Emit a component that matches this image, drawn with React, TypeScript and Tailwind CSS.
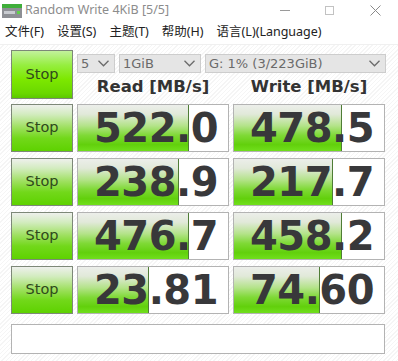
import { ReactNode } from 'react';

const rows = [
  { read: '522.0', readFill: 74, write: '478.5', writeFill: 72 },
  { read: '238.9', readFill: 67, write: '217.7', writeFill: 66 },
  { read: '476.7', readFill: 74, write: '458.2', writeFill: 72 },
  { read: '23.81', readFill: 47, write: '74.60', writeFill: 57 },
];

const barGradient =
  'bg-[linear-gradient(to_bottom,#eceeea_0%,#e1e9d9_20%,#b4e38a_45%,#7fd936_66%,#62d00c_86%,#70df1c_100%)]';

function Chevron() {
  return (
    <svg width="11" height="7" viewBox="0 0 11 7" className="shrink-0">
      <path d="M0.5 0.8 L5.5 5.8 L10.5 0.8" fill="none" stroke="#6b6b6b" strokeWidth="1.3" />
    </svg>
  );
}

function Select({ width, children }: { width: string; children: ReactNode }) {
  return (
    <div
      className={`${width} h-[19px] flex items-center justify-between pl-[3px] pr-[5px] bg-[#e5e5e5] border border-[#cdcdcd] text-[13px] text-[#6a6a6a]`}
    >
      <span className="leading-none">{children}</span>
      <Chevron />
    </div>
  );
}

function StopButton({ big }: { big?: boolean }) {
  return (
    <div
      className={`w-[62px] flex items-center justify-center border border-[#7d8878] text-[14.5px] text-[#2f4a1c] ${
        big
          ? 'h-[49px] bg-[linear-gradient(to_bottom,#c2f29c_0%,#96ee40_30%,#7de800_60%,#6ad800_90%,#5cc800_100%)]'
          : 'h-[48px] bg-[linear-gradient(to_bottom,#eef0ec_0%,#d3ecc0_20%,#9fe061_48%,#72d81a_72%,#5ed200_100%)]'
      }`}
    >
      Stop
    </div>
  );
}

function ValueBox({ value, fill }: { value: string; fill: number }) {
  return (
    <div className="relative w-[152px] h-[48px] bg-white border border-[#b3b3b3] overflow-hidden">
      <div
        className={`absolute left-0 top-0 bottom-0 ${barGradient} border-r border-[#4f7d36]`}
        style={{ width: `${fill}%` }}
      />
      <div className="relative h-full flex items-center justify-end pr-[10px] text-[40px] font-bold text-[#38383a] leading-none tracking-[-0.5px]">
        {value}
      </div>
    </div>
  );
}

export default function App() {
  return (
    <div
      className="w-[398px] h-[361px] bg-white overflow-hidden"
      style={{ fontFamily: '"DejaVu Sans", Verdana, sans-serif' }}
    >
      {/* title bar */}
      <div className="h-[21px] flex items-center font-['Noto_Sans','Noto_Sans_CJK_SC',sans-serif]">
        <svg width="20" height="14" viewBox="0 0 20 14" className="ml-[2px] mt-[1px]">
          <rect x="0" y="0" width="20" height="4" fill="#3fae3a" />
          <rect x="0" y="4" width="20" height="10" fill="#8d8f94" />
          <rect x="2" y="7" width="11" height="3" fill="#c8cbd0" />
          <rect x="15" y="7" width="3" height="3" fill="#5fd04a" />
        </svg>
        <span className="ml-[3px] text-[12.5px] text-[#8c8c8c]">Random Write 4KiB [5/5]</span>
        <div className="ml-auto flex items-center">
          <div className="w-[10px] h-px bg-[#9a9a9a] mr-[35px]" />
          <div className="w-[9px] h-[9px] border border-[#c2c2c2] mr-[36px]" />
          <svg width="11" height="11" viewBox="0 0 11 11" className="mr-[17px]">
            <path d="M0.5 0.5 L10.5 10.5 M10.5 0.5 L0.5 10.5" stroke="#8a8a8a" strokeWidth="1" />
          </svg>
        </div>
      </div>

      {/* menu bar */}
      <div className="h-[24px] flex items-center gap-[13px] pl-[5px] text-[12.5px] text-[#222] border-b border-[#f0f0f0] font-['Noto_Sans','Noto_Sans_CJK_SC',sans-serif]">
        <span>文件(F)</span>
        <span>设置(S)</span>
        <span>主题(T)</span>
        <span>帮助(H)</span>
        <span>语言(L)(Language)</span>
      </div>

      {/* main */}
      <div className="h-[316px] pl-[11px] pt-[5px] bg-[repeating-linear-gradient(135deg,#ffffff_0px,#ffffff_2px,#f5f5f5_2px,#f5f5f5_3px)]">
        <div className="flex gap-[4px]">
          <StopButton big />
          <div className="flex flex-col">
            <div className="flex gap-[4px] mt-[4px]">
              <Select width="w-[38px]">5</Select>
              <Select width="w-[82px]">1GiB</Select>
              <Select width="w-[181px]">G: 1% (3/223GiB)</Select>
            </div>
            <div className="flex mt-[6px] text-[16.5px] font-bold text-[#333] leading-none">
              <div className="w-[152px] text-center">Read [MB/s]</div>
              <div className="w-[4px]" />
              <div className="w-[152px] text-center">Write [MB/s]</div>
            </div>
          </div>
        </div>

        <div className="flex flex-col gap-[6px] mt-[5px]">
          {rows.map((r, i) => (
            <div key={i} className="flex gap-[4px]">
              <StopButton />
              <ValueBox value={r.read} fill={r.readFill} />
              <ValueBox value={r.write} fill={r.writeFill} />
            </div>
          ))}
        </div>

        <div className="mt-[10px] w-[374px] h-[30px] bg-white border border-[#b3b3b3]" />
      </div>
    </div>
  );
}
